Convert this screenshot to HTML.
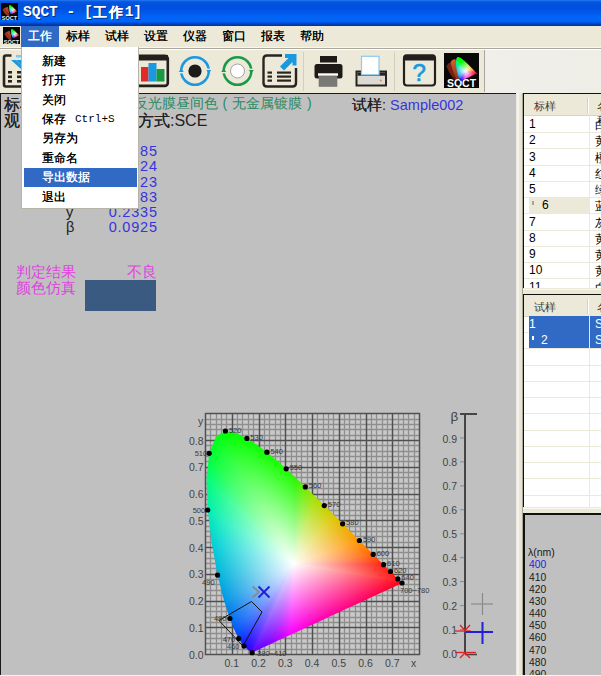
<!DOCTYPE html>
<html><head><meta charset="utf-8">
<style>
*{margin:0;padding:0;box-sizing:border-box}
html,body{width:601px;height:676px;overflow:hidden;background:#ECE9D8;font-family:"Liberation Sans",sans-serif;position:relative}
.a{position:absolute;white-space:nowrap}
#title{left:0;top:0;width:601px;height:26px;background:linear-gradient(#2a7cf4 0px,#1064e6 1px,#0456e0 2px,#0050de 5px,#0052e2 9px,#0058ea 12px,#0062f4 16px,#0066f8 21px,#005ef0 22px,#0046c6 23.5px,#0036a6 25px,#0034a0 26px)}
#ttext{left:23px;top:3px;color:#fff;font:bold 14.5px "Liberation Mono",monospace;letter-spacing:0px;text-shadow:1px 1px 0 #0a2a8a}
#ttext b{font-size:14px;letter-spacing:2px;font-family:"Liberation Sans",sans-serif;position:relative;top:1px;text-shadow:0.6px 0 0 #fff,1px 1px 0 #0a2a8a}
#menubar{left:0;top:26px;width:601px;height:21px;background:#ECE9D8}
.mi{position:absolute;top:28px;font-size:12px;color:#000;text-shadow:0.35px 0 0 currentColor;height:16px;line-height:16px}
#menusel{left:21px;top:26px;width:38px;height:21px;background:#316AC5}
#toolbar{left:0;top:47px;width:601px;height:46px;background:linear-gradient(90deg,#ECE9D8 0,#ECE9D8 485px,#f0efea 485px,#eeede6 601px);border-top:1px solid #f7f6f0}
#tbl2{left:0;top:48px;width:601px;height:2px;border-top:1px solid #aaa89e;border-bottom:1px solid #fff}
#tbline{left:0;top:92px;width:601px;height:1px;background:#9d9a8c}
#leftp{left:0;top:93px;width:516px;height:583px;background:#C0C0C0;border-top:1px solid #1a1a1a;border-left:1px solid #1a1a1a}
#split{left:516px;top:93px;width:7px;height:583px;background:linear-gradient(90deg,#dcdcd6 0,#f6f5ee 1px,#f4f3ea 3px,#ebe8d8 3.5px,#e6e3d2 5.5px,#8a887c 7px)}
.tbl{position:absolute;left:523px;width:78px;background:#fff;overflow:hidden;border-left:1px solid #111;border-top:1px solid #111}
.hdr{position:absolute;left:0;top:0;width:78px;height:22px;background:#ECE9D8;border-bottom:1px solid #d8d4c4}
.hdr span{position:absolute;left:10px;top:6px;font-size:10.5px;color:#3a3a3a}
.row{position:absolute;left:0;width:78px;height:17px;border-bottom:1px solid #ece9d8}
.row span{position:absolute;left:5px;top:1px;font-size:12px;color:#000}
.selbg{position:absolute;left:5px;top:0;width:61px;height:16px}
.c2,.c2s{position:absolute;left:71px;top:1px;font-style:normal;font-size:12px;color:#000}
.c2s{color:#fff}
.hdr em{position:absolute;left:63px;top:4px;width:2px;height:15px;background:#fff;border-left:1px solid #d6d2c2}
.hdr i{position:absolute;left:73px;top:6px;font-size:10.5px;color:#3a3a3a;font-style:normal}
.vcol{position:absolute;left:65px;top:0;width:1px;background:#ECE9D8}
#dd{left:21px;top:47px;width:118px;height:162px;background:#fff;border:1px solid #b8b5a8;border-top:none}
.dit{position:absolute;left:20px;font-size:12px;color:#000;text-shadow:0.35px 0 0 currentColor}
#ddsel{left:2px;top:121px;width:113px;height:19px;background:#316AC5}
.val{position:absolute;right:443.2px;font-size:14.5px;color:#3535dd;letter-spacing:0.8px}
</style></head><body>
<div id="title" class="a"></div>
<svg class="a" style="left:1px;top:3px" width="17" height="17" viewBox="0 0 17 17"><rect width="17" height="17" fill="#050505"/><path d="M1.5,7 Q3,4 5,5 Q6.5,9 8.5,13 L6.5,13 Q2.5,10 1.5,7Z" fill="#9a3020"/><path d="M4,5 Q5.5,3.5 7,4 L8.5,12 Q5.5,8 4,5Z" fill="#c85a30" opacity=".8"/><text x="8.5" y="16.5" text-anchor="middle" font-size="5.5" fill="#eee" font-family="Liberation Sans" font-weight="bold">SQCT</text></svg>
<div class="a" style="left:8.94px;top:4.29px;width:9.03px;height:10.08px;background:radial-gradient(circle at 3.73px 6.31px,#fff 0,rgba(255,255,255,.6) 1.2px,rgba(255,255,255,0) 4.0px),conic-gradient(from 0deg at 3.73px 6.31px, #29f700 0deg, #2df500 1.30deg, #6eec00 8.50deg, #a5e000 17.24deg, #c0d400 27.55deg, #dcc800 38.93deg, #e8b700 50.47deg, #f3a700 61.14deg, #ff9600 70.22deg, #ff7d00 77.50deg, #ff6400 82.99deg, #ff440a 87.23deg, #ff2314 90.34deg, #ff2114 92.67deg, #ff1f15 94.38deg, #ff1d15 95.66deg, #ff1b15 96.64deg, #ff1915 97.43deg, #ff1716 98.06deg, #ff1516 98.54deg, #ff1316 98.90deg, #ff1017 99.37deg, #ff0818 99.76deg, #ff0019 99.91deg, #ff002a 103.24deg, #ff0043 107.15deg, #ff0057 111.75deg, #ff0068 117.17deg, #ff0078 123.52deg, #ff0089 130.88deg, #ff0099 139.18deg, #ff00ab 148.23deg, #ff00be 157.63deg, #ff00d3 166.90deg, #ff00eb 175.58deg, #f600ff 183.39deg, #b900ff 190.20deg, #8a00ff 196.04deg, #6a00ff 201.01deg, #5a00ff 205.22deg, #5300ff 205.26deg, #4d00ff 205.32deg, #4600ff 205.42deg, #4300ff 205.49deg, #3f00ff 205.61deg, #3c00ff 205.81deg, #3900ff 206.08deg, #3500ff 206.48deg, #3200ff 206.99deg, #2a02ff 207.66deg, #2305ff 208.58deg, #1c08ff 209.74deg, #140aff 211.27deg, #0a23ff 213.30deg, #003cff 216.51deg, #0058f8 221.49deg, #0073f0 229.58deg, #0097e5 242.63deg, #00b5dd 261.80deg, #00d0d7 284.05deg, #00eeb3 302.17deg, #00fc7a 314.35deg, #00ff32 322.65deg, #00ff19 328.55deg, #00ff00 332.81deg, #04ff00 336.24deg, #08ff00 339.54deg, #0cff00 342.90deg, #11ff00 346.50deg, #15ff00 350.61deg, #19ff00 355.44deg, #29f700 360deg);clip-path:polygon(1.98px 10.02px,1.97px 10.02px,1.97px 10.03px,1.96px 10.03px,1.95px 10.03px,1.95px 10.02px,1.93px 10.01px,1.92px 10.00px,1.90px 9.98px,1.87px 9.96px,1.83px 9.92px,1.78px 9.88px,1.72px 9.82px,1.64px 9.75px,1.54px 9.63px,1.42px 9.43px,1.25px 9.10px,1.05px 8.59px,0.79px 7.83px,0.53px 6.77px,0.29px 5.44px,0.11px 4.03px,0.06px 2.72px,0.18px 1.65px,0.46px 0.96px,0.86px 0.71px,1.30px 0.80px,1.76px 1.03px,2.19px 1.30px,2.60px 1.61px,3.01px 1.94px,3.41px 2.30px,3.81px 2.68px,4.21px 3.06px,4.61px 3.46px,5.01px 3.85px,5.40px 4.24px,5.78px 4.61px,6.14px 4.97px,6.48px 5.31px,6.79px 5.63px,7.07px 5.89px,7.30px 6.13px,7.50px 6.33px,7.66px 6.49px,7.79px 6.62px,7.89px 6.72px,7.97px 6.80px,8.04px 6.87px,8.10px 6.92px,8.14px 6.97px,8.18px 7.00px,8.22px 7.05px,8.26px 7.08px,8.28px 7.10px,7.88px 7.28px,7.49px 7.46px,7.09px 7.65px,6.70px 7.83px,6.31px 8.01px,5.91px 8.20px,5.52px 8.38px,5.13px 8.56px,4.73px 8.74px,4.34px 8.93px,3.95px 9.11px,3.55px 9.29px,3.16px 9.48px,2.76px 9.66px,2.37px 9.84px)"></div>
<div id="ttext" class="a">SQCT - [<b>工作</b>1]</div>
<div id="menubar" class="a"></div>
<svg class="a" style="left:3px;top:27px" width="17" height="17" viewBox="0 0 17 17"><rect width="17" height="17" fill="#050505"/><path d="M1.5,7 Q3,4 5,5 Q6.5,9 8.5,13 L6.5,13 Q2.5,10 1.5,7Z" fill="#9a3020"/><path d="M4,5 Q5.5,3.5 7,4 L8.5,12 Q5.5,8 4,5Z" fill="#c85a30" opacity=".8"/><text x="8.5" y="16.5" text-anchor="middle" font-size="5.5" fill="#eee" font-family="Liberation Sans" font-weight="bold">SQCT</text></svg>
<div class="a" style="left:10.94px;top:28.29px;width:9.03px;height:10.08px;background:radial-gradient(circle at 3.73px 6.31px,#fff 0,rgba(255,255,255,.6) 1.2px,rgba(255,255,255,0) 4.0px),conic-gradient(from 0deg at 3.73px 6.31px, #29f700 0deg, #2df500 1.30deg, #6eec00 8.50deg, #a5e000 17.24deg, #c0d400 27.55deg, #dcc800 38.93deg, #e8b700 50.47deg, #f3a700 61.14deg, #ff9600 70.22deg, #ff7d00 77.50deg, #ff6400 82.99deg, #ff440a 87.23deg, #ff2314 90.34deg, #ff2114 92.67deg, #ff1f15 94.38deg, #ff1d15 95.66deg, #ff1b15 96.64deg, #ff1915 97.43deg, #ff1716 98.06deg, #ff1516 98.54deg, #ff1316 98.90deg, #ff1017 99.37deg, #ff0818 99.76deg, #ff0019 99.91deg, #ff002a 103.24deg, #ff0043 107.15deg, #ff0057 111.75deg, #ff0068 117.17deg, #ff0078 123.52deg, #ff0089 130.88deg, #ff0099 139.18deg, #ff00ab 148.23deg, #ff00be 157.63deg, #ff00d3 166.90deg, #ff00eb 175.58deg, #f600ff 183.39deg, #b900ff 190.20deg, #8a00ff 196.04deg, #6a00ff 201.01deg, #5a00ff 205.22deg, #5300ff 205.26deg, #4d00ff 205.32deg, #4600ff 205.42deg, #4300ff 205.49deg, #3f00ff 205.61deg, #3c00ff 205.81deg, #3900ff 206.08deg, #3500ff 206.48deg, #3200ff 206.99deg, #2a02ff 207.66deg, #2305ff 208.58deg, #1c08ff 209.74deg, #140aff 211.27deg, #0a23ff 213.30deg, #003cff 216.51deg, #0058f8 221.49deg, #0073f0 229.58deg, #0097e5 242.63deg, #00b5dd 261.80deg, #00d0d7 284.05deg, #00eeb3 302.17deg, #00fc7a 314.35deg, #00ff32 322.65deg, #00ff19 328.55deg, #00ff00 332.81deg, #04ff00 336.24deg, #08ff00 339.54deg, #0cff00 342.90deg, #11ff00 346.50deg, #15ff00 350.61deg, #19ff00 355.44deg, #29f700 360deg);clip-path:polygon(1.98px 10.02px,1.97px 10.02px,1.97px 10.03px,1.96px 10.03px,1.95px 10.03px,1.95px 10.02px,1.93px 10.01px,1.92px 10.00px,1.90px 9.98px,1.87px 9.96px,1.83px 9.92px,1.78px 9.88px,1.72px 9.82px,1.64px 9.75px,1.54px 9.63px,1.42px 9.43px,1.25px 9.10px,1.05px 8.59px,0.79px 7.83px,0.53px 6.77px,0.29px 5.44px,0.11px 4.03px,0.06px 2.72px,0.18px 1.65px,0.46px 0.96px,0.86px 0.71px,1.30px 0.80px,1.76px 1.03px,2.19px 1.30px,2.60px 1.61px,3.01px 1.94px,3.41px 2.30px,3.81px 2.68px,4.21px 3.06px,4.61px 3.46px,5.01px 3.85px,5.40px 4.24px,5.78px 4.61px,6.14px 4.97px,6.48px 5.31px,6.79px 5.63px,7.07px 5.89px,7.30px 6.13px,7.50px 6.33px,7.66px 6.49px,7.79px 6.62px,7.89px 6.72px,7.97px 6.80px,8.04px 6.87px,8.10px 6.92px,8.14px 6.97px,8.18px 7.00px,8.22px 7.05px,8.26px 7.08px,8.28px 7.10px,7.88px 7.28px,7.49px 7.46px,7.09px 7.65px,6.70px 7.83px,6.31px 8.01px,5.91px 8.20px,5.52px 8.38px,5.13px 8.56px,4.73px 8.74px,4.34px 8.93px,3.95px 9.11px,3.55px 9.29px,3.16px 9.48px,2.76px 9.66px,2.37px 9.84px)"></div>
<div id="menusel" class="a"></div>
<div class="mi" style="left:28px;color:#fff">工作</div>
<div class="mi" style="left:66px">标样</div>
<div class="mi" style="left:105px">试样</div>
<div class="mi" style="left:144px">设置</div>
<div class="mi" style="left:183px">仪器</div>
<div class="mi" style="left:222px">窗口</div>
<div class="mi" style="left:261px">报表</div>
<div class="mi" style="left:300px">帮助</div>
<div id="toolbar" class="a"></div>
<div id="tbl2" class="a"></div>
<!-- toolbar icons -->
<svg class="a" style="left:0;top:47px" width="601" height="46" viewBox="0 47 601 46">
 <path d="M11.5,55.5 H6 Q4,55.5 4,57.5 V84.5 Q4,86.5 6,86.5 H24" fill="none" stroke="#2a2420" stroke-width="2.6"/>
 <polygon points="11,60 16,60 21,65 21,69" fill="#1a98e0"/>
 <polygon points="16,60 21,60 21,65" fill="#1a98e0"/>
 <rect x="16" y="55" width="5" height="2.5" fill="#7cc8f0"/>
 <g fill="#2a2420"><rect x="8" y="71" width="4" height="2.6"/><rect x="8" y="75.5" width="4" height="2.6"/><rect x="8" y="80" width="4" height="2.6"/><rect x="17" y="71" width="5" height="2.6"/><rect x="17" y="75.5" width="5" height="2.6"/><rect x="17" y="80" width="5" height="2.6"/></g>
 <!-- bar chart -->
 <rect x="136.2" y="55.7" width="31.6" height="30.2" rx="3" fill="none" stroke="#231f1c" stroke-width="2.6"/>
 <rect x="136" y="55" width="32" height="5.5" fill="#231f1c"/>
 <rect x="141" y="67" width="7.5" height="14.5" fill="#e02a27"/>
 <rect x="148.5" y="63" width="8" height="18.5" fill="#1a98e0"/>
 <rect x="156.5" y="69" width="8" height="12.5" fill="#189a44"/>
 <!-- blue circle -->
 <circle cx="195" cy="71" r="13.8" fill="none" stroke="#1a98e0" stroke-width="2.5"/>
 <circle cx="195" cy="71" r="6.6" fill="#1e1a17"/>
 <rect x="178" y="72" width="6" height="1.4" fill="#ECE9D8"/><rect x="206" y="68.6" width="6" height="1.4" fill="#ECE9D8"/>
 <polygon points="178.7,72 183.7,72 181.2,68.5" fill="#1a98e0"/><polygon points="206.3,70 211.3,70 208.8,73.5" fill="#1a98e0"/>
 <!-- green circle -->
 <circle cx="237.5" cy="71" r="13.8" fill="none" stroke="#1a9a48" stroke-width="2.5"/>
 <circle cx="237.5" cy="71" r="7" fill="#fff" stroke="#9a9a9a" stroke-width="0.9"/>
 <rect x="220.5" y="72" width="6" height="1.4" fill="#ECE9D8"/><rect x="248.5" y="68.6" width="6" height="1.4" fill="#ECE9D8"/>
 <polygon points="221.2,72 226.2,72 223.7,68.5" fill="#1a9a48"/><polygon points="248.8,70 253.8,70 251.3,73.5" fill="#1a9a48"/>
 <!-- doc arrow -->
 <path d="M282,55.5 H267 Q263.5,55.5 263.5,59 V83 Q263.5,86.5 267,86.5 H292.5 Q296,86.5 296,83 V68" fill="none" stroke="#2a2420" stroke-width="2.4"/>
 <polygon points="280,66.5 288.5,58 285,58 285,54 296.5,54 296.5,65.5 292.5,65.5 292.5,62 284,70.5" fill="#1a98e0"/>
 <g fill="#2a2420"><rect x="267.5" y="71.5" width="4.5" height="2.2"/><rect x="267.5" y="75.5" width="4.5" height="2.2"/><rect x="267.5" y="79.5" width="4.5" height="2.2"/><rect x="277" y="71.5" width="14" height="2.2"/><rect x="277" y="75.5" width="14" height="2.2"/><rect x="277" y="79.5" width="14" height="2.2"/></g>
 <line x1="303.5" y1="52" x2="303.5" y2="91" stroke="#d3cfbf"/>
 <!-- printer -->
 <rect x="320" y="56" width="17" height="6.5" fill="#1e1a17"/>
 <rect x="314.5" y="64" width="28" height="14.5" rx="2.5" fill="#1e1a17"/>
 <rect x="318" y="73.3" width="20" height="2.5" fill="#fff"/>
 <rect x="318.7" y="75.8" width="18.6" height="11" fill="#7a7874"/>
 <!-- print preview -->
 <rect x="356.5" y="71.5" width="29.5" height="14" fill="#dcdad4" stroke="#2a2420" stroke-width="2"/>
 <rect x="357.5" y="72.5" width="27.5" height="3.2" fill="#2a2420"/>
 <rect x="361.5" y="56.3" width="17.5" height="18.5" fill="#fff" stroke="#8ccaee" stroke-width="1.2"/>
 <circle cx="380.8" cy="80.5" r="1" fill="#e88a40"/>
 <line x1="394.5" y1="52" x2="394.5" y2="91" stroke="#d3cfbf"/>
 <!-- help -->
 <rect x="404" y="55.5" width="31" height="30" rx="3" fill="none" stroke="#231f1c" stroke-width="2.2"/>
 <rect x="403.5" y="54.5" width="32" height="6" rx="2" fill="#231f1c"/>
 <text x="419.3" y="81.3" text-anchor="middle" font-size="24" fill="#1a98e0" stroke="#1a98e0" stroke-width="0.7" font-family="Liberation Sans">?</text>
 <!-- logo -->
 <defs><linearGradient id="lg1" x1="0" y1="0" x2="1" y2="1"><stop offset="0" stop-color="#22dd22"/><stop offset="0.45" stop-color="#eeeeaa"/><stop offset="1" stop-color="#ee3355"/></linearGradient></defs>
 <rect x="444" y="53" width="35" height="35" fill="#080808"/>
 <defs><linearGradient id="pt1" x1="0" y1="0" x2="0" y2="1"><stop offset="0" stop-color="#a03020" stop-opacity=".7"/><stop offset="1" stop-color="#6a1a10"/></linearGradient><linearGradient id="pt2" x1="0" y1="0" x2="0" y2="1"><stop offset="0" stop-color="#d86030"/><stop offset="1" stop-color="#8a3018"/></linearGradient></defs>
 <path d="M446.5,66 Q449,61 452,63 Q455,72 458,80 L455,80 Q449,74 446.5,66Z" fill="url(#pt1)"/>
 <path d="M450.5,62 Q453,58 456,60 Q457,70 459.5,80 L457,80 Q452,70 450.5,62Z" fill="url(#pt2)"/>
 <path d="M455,59 Q457,57 459,58 L459,70 Q456,64 455,59Z" fill="#5a2a80" opacity=".6"/>
 <text x="461.5" y="86.5" text-anchor="middle" font-size="10.5" font-weight="bold" fill="#fff" font-family="Liberation Sans">SQCT</text>
 <line x1="484.5" y1="50" x2="484.5" y2="92" stroke="#aaa89e"/>
</svg>
<div id="leftp" class="a"></div>
<div id="split" class="a"></div>

<!-- left panel texts -->
<div class="a" style="left:4px;top:95px;font-size:16px;color:#222;text-shadow:0.4px 0 0 #222">标样：</div>
<div class="a" style="left:4px;top:111px;font-size:16px;color:#222;text-shadow:0.4px 0 0 #222">观</div>
<div class="a" style="left:122px;top:111px;font-size:16px;color:#222"><span style="text-shadow:0.4px 0 0 #222">量方式</span>:SCE</div>
<div class="a" style="left:134px;top:95px;font-size:14px;color:#2a8a62">反光膜昼间色</div>
<div class="a" style="left:222.5px;top:95px;font-size:14px;color:#2a8a62">(</div>
<div class="a" style="left:232px;top:95px;font-size:14px;color:#2a8a62">无金属镀膜</div>
<div class="a" style="left:307px;top:95px;font-size:14px;color:#2a8a62">)</div>
<div class="a" style="left:352px;top:96px;font-size:14.5px;color:#222"><span style="text-shadow:0.4px 0 0 #222">试样</span>: <span style="color:#3535dd">Sample002</span></div>

<div class="val" style="top:143px">85</div>
<div class="val" style="top:158px">24</div>
<div class="val" style="top:174px">23</div>
<div class="val" style="top:189px">83</div>
<div class="a" style="left:66px;top:204px;font-size:14.5px;color:#222">y</div>
<div class="val" style="top:204px">0.2335</div>
<div class="a" style="left:66px;top:219px;font-size:14.5px;color:#222">β</div>
<div class="val" style="top:219px">0.0925</div>

<div class="a" style="left:16px;top:263px;font-size:14.5px;color:#e040e0">判定结果</div>
<div class="a" style="left:127px;top:263px;font-size:14.5px;color:#e040e0">不良</div>
<div class="a" style="left:16px;top:279px;font-size:14.5px;color:#e040e0">颜色仿真</div>
<div class="a" style="left:85px;top:280px;width:71px;height:31px;background:#3b5a82"></div>

<!-- chart -->
<svg class="a" style="left:0;top:0" width="601" height="676" viewBox="0 0 601 676" font-family="Liberation Sans">
<rect x="205" y="413" width="215" height="242" fill="#c9c9c9"/><g stroke="#8e8e8e" stroke-width="1.3"><line x1="210.5" y1="413" x2="210.5" y2="655" /><line x1="216.5" y1="413" x2="216.5" y2="655" /><line x1="221.5" y1="413" x2="221.5" y2="655" /><line x1="226.5" y1="413" x2="226.5" y2="655" /><line x1="237.5" y1="413" x2="237.5" y2="655" /><line x1="242.5" y1="413" x2="242.5" y2="655" /><line x1="248.5" y1="413" x2="248.5" y2="655" /><line x1="253.5" y1="413" x2="253.5" y2="655" /><line x1="264.5" y1="413" x2="264.5" y2="655" /><line x1="269.5" y1="413" x2="269.5" y2="655" /><line x1="275.5" y1="413" x2="275.5" y2="655" /><line x1="280.5" y1="413" x2="280.5" y2="655" /><line x1="291.5" y1="413" x2="291.5" y2="655" /><line x1="296.5" y1="413" x2="296.5" y2="655" /><line x1="301.5" y1="413" x2="301.5" y2="655" /><line x1="307.5" y1="413" x2="307.5" y2="655" /><line x1="317.5" y1="413" x2="317.5" y2="655" /><line x1="323.5" y1="413" x2="323.5" y2="655" /><line x1="328.5" y1="413" x2="328.5" y2="655" /><line x1="333.5" y1="413" x2="333.5" y2="655" /><line x1="344.5" y1="413" x2="344.5" y2="655" /><line x1="349.5" y1="413" x2="349.5" y2="655" /><line x1="355.5" y1="413" x2="355.5" y2="655" /><line x1="360.5" y1="413" x2="360.5" y2="655" /><line x1="371.5" y1="413" x2="371.5" y2="655" /><line x1="376.5" y1="413" x2="376.5" y2="655" /><line x1="382.5" y1="413" x2="382.5" y2="655" /><line x1="387.5" y1="413" x2="387.5" y2="655" /><line x1="398.5" y1="413" x2="398.5" y2="655" /><line x1="403.5" y1="413" x2="403.5" y2="655" /><line x1="408.5" y1="413" x2="408.5" y2="655" /><line x1="414.5" y1="413" x2="414.5" y2="655" /><line x1="205" y1="649.5" x2="420" y2="649.5" /><line x1="205" y1="643.5" x2="420" y2="643.5" /><line x1="205" y1="638.5" x2="420" y2="638.5" /><line x1="205" y1="633.5" x2="420" y2="633.5" /><line x1="205" y1="622.5" x2="420" y2="622.5" /><line x1="205" y1="617.5" x2="420" y2="617.5" /><line x1="205" y1="611.5" x2="420" y2="611.5" /><line x1="205" y1="606.5" x2="420" y2="606.5" /><line x1="205" y1="595.5" x2="420" y2="595.5" /><line x1="205" y1="590.5" x2="420" y2="590.5" /><line x1="205" y1="584.5" x2="420" y2="584.5" /><line x1="205" y1="579.5" x2="420" y2="579.5" /><line x1="205" y1="568.5" x2="420" y2="568.5" /><line x1="205" y1="563.5" x2="420" y2="563.5" /><line x1="205" y1="558.5" x2="420" y2="558.5" /><line x1="205" y1="552.5" x2="420" y2="552.5" /><line x1="205" y1="542.5" x2="420" y2="542.5" /><line x1="205" y1="536.5" x2="420" y2="536.5" /><line x1="205" y1="531.5" x2="420" y2="531.5" /><line x1="205" y1="526.5" x2="420" y2="526.5" /><line x1="205" y1="515.5" x2="420" y2="515.5" /><line x1="205" y1="510.5" x2="420" y2="510.5" /><line x1="205" y1="504.5" x2="420" y2="504.5" /><line x1="205" y1="499.5" x2="420" y2="499.5" /><line x1="205" y1="488.5" x2="420" y2="488.5" /><line x1="205" y1="483.5" x2="420" y2="483.5" /><line x1="205" y1="477.5" x2="420" y2="477.5" /><line x1="205" y1="472.5" x2="420" y2="472.5" /><line x1="205" y1="461.5" x2="420" y2="461.5" /><line x1="205" y1="456.5" x2="420" y2="456.5" /><line x1="205" y1="451.5" x2="420" y2="451.5" /><line x1="205" y1="445.5" x2="420" y2="445.5" /><line x1="205" y1="435.5" x2="420" y2="435.5" /><line x1="205" y1="429.5" x2="420" y2="429.5" /><line x1="205" y1="424.5" x2="420" y2="424.5" /><line x1="205" y1="419.5" x2="420" y2="419.5" /></g><g stroke="#505050" stroke-width="1.5"><line x1="205.5" y1="413" x2="205.5" y2="655" /><line x1="232.5" y1="413" x2="232.5" y2="655" /><line x1="259.5" y1="413" x2="259.5" y2="655" /><line x1="285.5" y1="413" x2="285.5" y2="655" /><line x1="312.5" y1="413" x2="312.5" y2="655" /><line x1="339.5" y1="413" x2="339.5" y2="655" /><line x1="366.5" y1="413" x2="366.5" y2="655" /><line x1="392.5" y1="413" x2="392.5" y2="655" /><line x1="419.5" y1="413" x2="419.5" y2="655" /><line x1="205" y1="654.5" x2="420" y2="654.5" /><line x1="205" y1="627.5" x2="420" y2="627.5" /><line x1="205" y1="601.5" x2="420" y2="601.5" /><line x1="205" y1="574.5" x2="420" y2="574.5" /><line x1="205" y1="547.5" x2="420" y2="547.5" /><line x1="205" y1="520.5" x2="420" y2="520.5" /><line x1="205" y1="494.5" x2="420" y2="494.5" /><line x1="205" y1="467.5" x2="420" y2="467.5" /><line x1="205" y1="440.5" x2="420" y2="440.5" /><line x1="205" y1="413.5" x2="420" y2="413.5" /></g>
</svg>
<div class="a" style="left:205px;top:414px;width:215px;height:240px;background:conic-gradient(from 0deg at 88.8px 150.1px, #29f700 0deg, #2df500 1.30deg, #6eec00 8.50deg, #a5e000 17.24deg, #c0d400 27.55deg, #dcc800 38.93deg, #e8b700 50.47deg, #f3a700 61.14deg, #ff9600 70.22deg, #ff7d00 77.50deg, #ff6400 82.99deg, #ff440a 87.23deg, #ff2314 90.34deg, #ff2114 92.67deg, #ff1f15 94.38deg, #ff1d15 95.66deg, #ff1b15 96.64deg, #ff1915 97.43deg, #ff1716 98.06deg, #ff1516 98.54deg, #ff1316 98.90deg, #ff1017 99.37deg, #ff0818 99.76deg, #ff0019 99.91deg, #ff002a 103.24deg, #ff0043 107.15deg, #ff0057 111.75deg, #ff0068 117.17deg, #ff0078 123.52deg, #ff0089 130.88deg, #ff0099 139.18deg, #ff00ab 148.23deg, #ff00be 157.63deg, #ff00d3 166.90deg, #ff00eb 175.58deg, #f600ff 183.39deg, #b900ff 190.20deg, #8a00ff 196.04deg, #6a00ff 201.01deg, #5a00ff 205.22deg, #5300ff 205.26deg, #4d00ff 205.32deg, #4600ff 205.42deg, #4300ff 205.49deg, #3f00ff 205.61deg, #3c00ff 205.81deg, #3900ff 206.08deg, #3500ff 206.48deg, #3200ff 206.99deg, #2a02ff 207.66deg, #2305ff 208.58deg, #1c08ff 209.74deg, #140aff 211.27deg, #0a23ff 213.30deg, #003cff 216.51deg, #0058f8 221.49deg, #0073f0 229.58deg, #0097e5 242.63deg, #00b5dd 261.80deg, #00d0d7 284.05deg, #00eeb3 302.17deg, #00fc7a 314.35deg, #00ff32 322.65deg, #00ff19 328.55deg, #00ff00 332.81deg, #04ff00 336.24deg, #08ff00 339.54deg, #0cff00 342.90deg, #11ff00 346.50deg, #15ff00 350.61deg, #19ff00 355.44deg, #29f700 360deg);clip-path:polygon(47.1px 238.7px,47.0px 238.7px,46.9px 238.7px,46.7px 238.7px,46.5px 238.7px,46.3px 238.6px,46.1px 238.4px,45.7px 238.2px,45.1px 237.7px,44.5px 237.1px,43.6px 236.3px,42.4px 235.3px,40.9px 233.9px,39.0px 232.1px,36.7px 229.3px,33.7px 224.5px,29.8px 216.8px,24.9px 204.5px,18.9px 186.3px,12.6px 161.1px,6.8px 129.6px,2.7px 96.0px,1.5px 64.8px,4.2px 39.3px,10.9px 22.8px,20.4px 17.0px,31.0px 19.0px,41.9px 24.4px,52.1px 30.9px,61.9px 38.2px,71.6px 46.2px,81.2px 54.8px,90.7px 63.7px,100.3px 72.9px,109.8px 82.3px,119.3px 91.6px,128.6px 100.8px,137.6px 109.8px,146.2px 118.4px,154.4px 126.5px,161.8px 133.9px,168.2px 140.4px,173.9px 146.0px,178.6px 150.7px,182.4px 154.5px,185.5px 157.5px,187.9px 159.9px,189.9px 161.9px,191.5px 163.5px,192.8px 164.9px,193.9px 165.9px,194.7px 166.7px,195.8px 167.8px,196.7px 168.7px,197.0px 169.0px,187.7px 173.4px,178.3px 177.7px,168.9px 182.1px,159.5px 186.4px,150.2px 190.8px,140.8px 195.1px,131.4px 199.5px,122.1px 203.8px,112.7px 208.2px,103.3px 212.6px,93.9px 216.9px,84.6px 221.3px,75.2px 225.6px,65.8px 230.0px,56.4px 234.3px)"></div>
<svg class="a" style="left:0;top:0" width="601" height="676" viewBox="0 0 601 676" font-family="Liberation Sans">
<defs><linearGradient id="w0" gradientUnits="userSpaceOnUse" x1="293.8" y1="564.1" x2="316.2" y2="631.3"><stop offset="0" stop-color="#fff"/><stop offset="1" stop-color="#fff" stop-opacity="0"/></linearGradient><linearGradient id="w1" gradientUnits="userSpaceOnUse" x1="293.8" y1="564.1" x2="309.2" y2="641.2"><stop offset="0" stop-color="#fff"/><stop offset="1" stop-color="#fff" stop-opacity="0"/></linearGradient><linearGradient id="w2" gradientUnits="userSpaceOnUse" x1="293.8" y1="564.1" x2="293.8" y2="652.7"><stop offset="0" stop-color="#fff"/><stop offset="1" stop-color="#fff" stop-opacity="0"/></linearGradient><linearGradient id="w3" gradientUnits="userSpaceOnUse" x1="293.8" y1="564.1" x2="293.8" y2="652.7"><stop offset="0" stop-color="#fff"/><stop offset="1" stop-color="#fff" stop-opacity="0"/></linearGradient><linearGradient id="w4" gradientUnits="userSpaceOnUse" x1="293.8" y1="564.1" x2="255.1" y2="654.3"><stop offset="0" stop-color="#fff"/><stop offset="1" stop-color="#fff" stop-opacity="0"/></linearGradient><linearGradient id="w5" gradientUnits="userSpaceOnUse" x1="293.8" y1="564.1" x2="241.5" y2="646.3"><stop offset="0" stop-color="#fff"/><stop offset="1" stop-color="#fff" stop-opacity="0"/></linearGradient><linearGradient id="w6" gradientUnits="userSpaceOnUse" x1="293.8" y1="564.1" x2="234.6" y2="639.5"><stop offset="0" stop-color="#fff"/><stop offset="1" stop-color="#fff" stop-opacity="0"/></linearGradient><linearGradient id="w7" gradientUnits="userSpaceOnUse" x1="293.8" y1="564.1" x2="232.3" y2="636.5"><stop offset="0" stop-color="#fff"/><stop offset="1" stop-color="#fff" stop-opacity="0"/></linearGradient><linearGradient id="w8" gradientUnits="userSpaceOnUse" x1="293.8" y1="564.1" x2="230.1" y2="633.3"><stop offset="0" stop-color="#fff"/><stop offset="1" stop-color="#fff" stop-opacity="0"/></linearGradient><linearGradient id="w9" gradientUnits="userSpaceOnUse" x1="293.8" y1="564.1" x2="231.4" y2="635.2"><stop offset="0" stop-color="#fff"/><stop offset="1" stop-color="#fff" stop-opacity="0"/></linearGradient><linearGradient id="w10" gradientUnits="userSpaceOnUse" x1="293.8" y1="564.1" x2="231.7" y2="635.7"><stop offset="0" stop-color="#fff"/><stop offset="1" stop-color="#fff" stop-opacity="0"/></linearGradient><linearGradient id="w11" gradientUnits="userSpaceOnUse" x1="293.8" y1="564.1" x2="230.9" y2="634.5"><stop offset="0" stop-color="#fff"/><stop offset="1" stop-color="#fff" stop-opacity="0"/></linearGradient><linearGradient id="w12" gradientUnits="userSpaceOnUse" x1="293.8" y1="564.1" x2="227.9" y2="630.0"><stop offset="0" stop-color="#fff"/><stop offset="1" stop-color="#fff" stop-opacity="0"/></linearGradient><linearGradient id="w13" gradientUnits="userSpaceOnUse" x1="293.8" y1="564.1" x2="224.1" y2="622.2"><stop offset="0" stop-color="#fff"/><stop offset="1" stop-color="#fff" stop-opacity="0"/></linearGradient><linearGradient id="w14" gradientUnits="userSpaceOnUse" x1="293.8" y1="564.1" x2="220.9" y2="610.6"><stop offset="0" stop-color="#fff"/><stop offset="1" stop-color="#fff" stop-opacity="0"/></linearGradient><linearGradient id="w15" gradientUnits="userSpaceOnUse" x1="293.8" y1="564.1" x2="219.9" y2="601.0"><stop offset="0" stop-color="#fff"/><stop offset="1" stop-color="#fff" stop-opacity="0"/></linearGradient><linearGradient id="w16" gradientUnits="userSpaceOnUse" x1="293.8" y1="564.1" x2="220.0" y2="593.5"><stop offset="0" stop-color="#fff"/><stop offset="1" stop-color="#fff" stop-opacity="0"/></linearGradient><linearGradient id="w17" gradientUnits="userSpaceOnUse" x1="293.8" y1="564.1" x2="220.0" y2="588.6"><stop offset="0" stop-color="#fff"/><stop offset="1" stop-color="#fff" stop-opacity="0"/></linearGradient><linearGradient id="w18" gradientUnits="userSpaceOnUse" x1="293.8" y1="564.1" x2="219.5" y2="582.5"><stop offset="0" stop-color="#fff"/><stop offset="1" stop-color="#fff" stop-opacity="0"/></linearGradient><linearGradient id="w19" gradientUnits="userSpaceOnUse" x1="293.8" y1="564.1" x2="218.2" y2="578.2"><stop offset="0" stop-color="#fff"/><stop offset="1" stop-color="#fff" stop-opacity="0"/></linearGradient><linearGradient id="w20" gradientUnits="userSpaceOnUse" x1="293.8" y1="564.1" x2="215.4" y2="573.7"><stop offset="0" stop-color="#fff"/><stop offset="1" stop-color="#fff" stop-opacity="0"/></linearGradient><linearGradient id="w21" gradientUnits="userSpaceOnUse" x1="293.8" y1="564.1" x2="209.8" y2="567.2"><stop offset="0" stop-color="#fff"/><stop offset="1" stop-color="#fff" stop-opacity="0"/></linearGradient><linearGradient id="w22" gradientUnits="userSpaceOnUse" x1="293.8" y1="564.1" x2="198.6" y2="554.1"><stop offset="0" stop-color="#fff"/><stop offset="1" stop-color="#fff" stop-opacity="0"/></linearGradient><linearGradient id="w23" gradientUnits="userSpaceOnUse" x1="293.8" y1="564.1" x2="182.6" y2="519.1"><stop offset="0" stop-color="#fff"/><stop offset="1" stop-color="#fff" stop-opacity="0"/></linearGradient><linearGradient id="w24" gradientUnits="userSpaceOnUse" x1="293.8" y1="564.1" x2="215.5" y2="437.0"><stop offset="0" stop-color="#fff"/><stop offset="1" stop-color="#fff" stop-opacity="0"/></linearGradient><linearGradient id="w25" gradientUnits="userSpaceOnUse" x1="293.8" y1="564.1" x2="315.9" y2="448.2"><stop offset="0" stop-color="#fff"/><stop offset="1" stop-color="#fff" stop-opacity="0"/></linearGradient><linearGradient id="w26" gradientUnits="userSpaceOnUse" x1="293.8" y1="564.1" x2="334.7" y2="482.4"><stop offset="0" stop-color="#fff"/><stop offset="1" stop-color="#fff" stop-opacity="0"/></linearGradient><linearGradient id="w27" gradientUnits="userSpaceOnUse" x1="293.8" y1="564.1" x2="337.2" y2="495.9"><stop offset="0" stop-color="#fff"/><stop offset="1" stop-color="#fff" stop-opacity="0"/></linearGradient><linearGradient id="w28" gradientUnits="userSpaceOnUse" x1="293.8" y1="564.1" x2="337.8" y2="504.9"><stop offset="0" stop-color="#fff"/><stop offset="1" stop-color="#fff" stop-opacity="0"/></linearGradient><linearGradient id="w29" gradientUnits="userSpaceOnUse" x1="293.8" y1="564.1" x2="337.8" y2="511.0"><stop offset="0" stop-color="#fff"/><stop offset="1" stop-color="#fff" stop-opacity="0"/></linearGradient><linearGradient id="w30" gradientUnits="userSpaceOnUse" x1="293.8" y1="564.1" x2="337.8" y2="514.9"><stop offset="0" stop-color="#fff"/><stop offset="1" stop-color="#fff" stop-opacity="0"/></linearGradient><linearGradient id="w31" gradientUnits="userSpaceOnUse" x1="293.8" y1="564.1" x2="337.8" y2="517.1"><stop offset="0" stop-color="#fff"/><stop offset="1" stop-color="#fff" stop-opacity="0"/></linearGradient><linearGradient id="w32" gradientUnits="userSpaceOnUse" x1="293.8" y1="564.1" x2="337.9" y2="518.2"><stop offset="0" stop-color="#fff"/><stop offset="1" stop-color="#fff" stop-opacity="0"/></linearGradient><linearGradient id="w33" gradientUnits="userSpaceOnUse" x1="293.8" y1="564.1" x2="338.0" y2="519.0"><stop offset="0" stop-color="#fff"/><stop offset="1" stop-color="#fff" stop-opacity="0"/></linearGradient><linearGradient id="w34" gradientUnits="userSpaceOnUse" x1="293.8" y1="564.1" x2="338.1" y2="519.2"><stop offset="0" stop-color="#fff"/><stop offset="1" stop-color="#fff" stop-opacity="0"/></linearGradient><linearGradient id="w35" gradientUnits="userSpaceOnUse" x1="293.8" y1="564.1" x2="338.2" y2="519.4"><stop offset="0" stop-color="#fff"/><stop offset="1" stop-color="#fff" stop-opacity="0"/></linearGradient><linearGradient id="w36" gradientUnits="userSpaceOnUse" x1="293.8" y1="564.1" x2="338.3" y2="519.5"><stop offset="0" stop-color="#fff"/><stop offset="1" stop-color="#fff" stop-opacity="0"/></linearGradient><linearGradient id="w37" gradientUnits="userSpaceOnUse" x1="293.8" y1="564.1" x2="338.3" y2="519.5"><stop offset="0" stop-color="#fff"/><stop offset="1" stop-color="#fff" stop-opacity="0"/></linearGradient><linearGradient id="w38" gradientUnits="userSpaceOnUse" x1="293.8" y1="564.1" x2="338.2" y2="519.5"><stop offset="0" stop-color="#fff"/><stop offset="1" stop-color="#fff" stop-opacity="0"/></linearGradient><linearGradient id="w39" gradientUnits="userSpaceOnUse" x1="293.8" y1="564.1" x2="338.4" y2="519.5"><stop offset="0" stop-color="#fff"/><stop offset="1" stop-color="#fff" stop-opacity="0"/></linearGradient><linearGradient id="w40" gradientUnits="userSpaceOnUse" x1="293.8" y1="564.1" x2="338.2" y2="519.5"><stop offset="0" stop-color="#fff"/><stop offset="1" stop-color="#fff" stop-opacity="0"/></linearGradient><linearGradient id="w41" gradientUnits="userSpaceOnUse" x1="293.8" y1="564.1" x2="338.2" y2="519.5"><stop offset="0" stop-color="#fff"/><stop offset="1" stop-color="#fff" stop-opacity="0"/></linearGradient><linearGradient id="w42" gradientUnits="userSpaceOnUse" x1="293.8" y1="564.1" x2="337.9" y2="519.5"><stop offset="0" stop-color="#fff"/><stop offset="1" stop-color="#fff" stop-opacity="0"/></linearGradient><linearGradient id="w43" gradientUnits="userSpaceOnUse" x1="293.8" y1="564.1" x2="338.4" y2="519.5"><stop offset="0" stop-color="#fff"/><stop offset="1" stop-color="#fff" stop-opacity="0"/></linearGradient><linearGradient id="w44" gradientUnits="userSpaceOnUse" x1="293.8" y1="564.1" x2="338.4" y2="519.5"><stop offset="0" stop-color="#fff"/><stop offset="1" stop-color="#fff" stop-opacity="0"/></linearGradient><linearGradient id="w45" gradientUnits="userSpaceOnUse" x1="293.8" y1="564.1" x2="337.9" y2="519.5"><stop offset="0" stop-color="#fff"/><stop offset="1" stop-color="#fff" stop-opacity="0"/></linearGradient><linearGradient id="w46" gradientUnits="userSpaceOnUse" x1="293.8" y1="564.1" x2="338.4" y2="519.5"><stop offset="0" stop-color="#fff"/><stop offset="1" stop-color="#fff" stop-opacity="0"/></linearGradient><linearGradient id="w47" gradientUnits="userSpaceOnUse" x1="293.8" y1="564.1" x2="338.4" y2="519.5"><stop offset="0" stop-color="#fff"/><stop offset="1" stop-color="#fff" stop-opacity="0"/></linearGradient><linearGradient id="w48" gradientUnits="userSpaceOnUse" x1="293.8" y1="564.1" x2="338.4" y2="519.5"><stop offset="0" stop-color="#fff"/><stop offset="1" stop-color="#fff" stop-opacity="0"/></linearGradient><linearGradient id="w49" gradientUnits="userSpaceOnUse" x1="293.8" y1="564.1" x2="337.1" y2="519.7"><stop offset="0" stop-color="#fff"/><stop offset="1" stop-color="#fff" stop-opacity="0"/></linearGradient><linearGradient id="w50" gradientUnits="userSpaceOnUse" x1="293.8" y1="564.1" x2="338.4" y2="519.4"><stop offset="0" stop-color="#fff"/><stop offset="1" stop-color="#fff" stop-opacity="0"/></linearGradient><linearGradient id="w51" gradientUnits="userSpaceOnUse" x1="293.8" y1="564.1" x2="338.4" y2="519.4"><stop offset="0" stop-color="#fff"/><stop offset="1" stop-color="#fff" stop-opacity="0"/></linearGradient><linearGradient id="w52" gradientUnits="userSpaceOnUse" x1="293.8" y1="564.1" x2="338.4" y2="519.4"><stop offset="0" stop-color="#fff"/><stop offset="1" stop-color="#fff" stop-opacity="0"/></linearGradient><linearGradient id="w53" gradientUnits="userSpaceOnUse" x1="293.8" y1="564.1" x2="338.4" y2="519.4"><stop offset="0" stop-color="#fff"/><stop offset="1" stop-color="#fff" stop-opacity="0"/></linearGradient><linearGradient id="w54" gradientUnits="userSpaceOnUse" x1="293.8" y1="564.1" x2="320.2" y2="621.0"><stop offset="0" stop-color="#fff"/><stop offset="1" stop-color="#fff" stop-opacity="0"/></linearGradient><linearGradient id="w55" gradientUnits="userSpaceOnUse" x1="293.8" y1="564.1" x2="320.2" y2="621.0"><stop offset="0" stop-color="#fff"/><stop offset="1" stop-color="#fff" stop-opacity="0"/></linearGradient><linearGradient id="w56" gradientUnits="userSpaceOnUse" x1="293.8" y1="564.1" x2="320.2" y2="621.0"><stop offset="0" stop-color="#fff"/><stop offset="1" stop-color="#fff" stop-opacity="0"/></linearGradient><linearGradient id="w57" gradientUnits="userSpaceOnUse" x1="293.8" y1="564.1" x2="320.2" y2="621.0"><stop offset="0" stop-color="#fff"/><stop offset="1" stop-color="#fff" stop-opacity="0"/></linearGradient><linearGradient id="w58" gradientUnits="userSpaceOnUse" x1="293.8" y1="564.1" x2="320.2" y2="621.0"><stop offset="0" stop-color="#fff"/><stop offset="1" stop-color="#fff" stop-opacity="0"/></linearGradient><linearGradient id="w59" gradientUnits="userSpaceOnUse" x1="293.8" y1="564.1" x2="320.2" y2="621.0"><stop offset="0" stop-color="#fff"/><stop offset="1" stop-color="#fff" stop-opacity="0"/></linearGradient><linearGradient id="w60" gradientUnits="userSpaceOnUse" x1="293.8" y1="564.1" x2="320.2" y2="621.0"><stop offset="0" stop-color="#fff"/><stop offset="1" stop-color="#fff" stop-opacity="0"/></linearGradient><linearGradient id="w61" gradientUnits="userSpaceOnUse" x1="293.8" y1="564.1" x2="320.2" y2="621.0"><stop offset="0" stop-color="#fff"/><stop offset="1" stop-color="#fff" stop-opacity="0"/></linearGradient><linearGradient id="w62" gradientUnits="userSpaceOnUse" x1="293.8" y1="564.1" x2="320.2" y2="621.0"><stop offset="0" stop-color="#fff"/><stop offset="1" stop-color="#fff" stop-opacity="0"/></linearGradient><linearGradient id="w63" gradientUnits="userSpaceOnUse" x1="293.8" y1="564.1" x2="320.2" y2="621.0"><stop offset="0" stop-color="#fff"/><stop offset="1" stop-color="#fff" stop-opacity="0"/></linearGradient><linearGradient id="w64" gradientUnits="userSpaceOnUse" x1="293.8" y1="564.1" x2="320.2" y2="621.0"><stop offset="0" stop-color="#fff"/><stop offset="1" stop-color="#fff" stop-opacity="0"/></linearGradient><linearGradient id="w65" gradientUnits="userSpaceOnUse" x1="293.8" y1="564.1" x2="320.2" y2="621.0"><stop offset="0" stop-color="#fff"/><stop offset="1" stop-color="#fff" stop-opacity="0"/></linearGradient><linearGradient id="w66" gradientUnits="userSpaceOnUse" x1="293.8" y1="564.1" x2="320.2" y2="621.0"><stop offset="0" stop-color="#fff"/><stop offset="1" stop-color="#fff" stop-opacity="0"/></linearGradient><linearGradient id="w67" gradientUnits="userSpaceOnUse" x1="293.8" y1="564.1" x2="320.2" y2="621.0"><stop offset="0" stop-color="#fff"/><stop offset="1" stop-color="#fff" stop-opacity="0"/></linearGradient><linearGradient id="w68" gradientUnits="userSpaceOnUse" x1="293.8" y1="564.1" x2="320.2" y2="621.0"><stop offset="0" stop-color="#fff"/><stop offset="1" stop-color="#fff" stop-opacity="0"/></linearGradient><linearGradient id="w69" gradientUnits="userSpaceOnUse" x1="293.8" y1="564.1" x2="320.2" y2="621.0"><stop offset="0" stop-color="#fff"/><stop offset="1" stop-color="#fff" stop-opacity="0"/></linearGradient></defs><g shape-rendering="crispEdges"><polygon points="293.77,564.12 252.07,652.66 251.99,652.69" fill="url(#w0)"/><polygon points="293.77,564.12 251.99,652.69 251.86,652.72" fill="url(#w1)"/><polygon points="293.77,564.12 251.86,652.72 251.67,652.72" fill="url(#w2)"/><polygon points="293.77,564.12 251.67,652.72 251.54,652.72" fill="url(#w3)"/><polygon points="293.77,564.12 251.54,652.72 251.35,652.64" fill="url(#w4)"/><polygon points="293.77,564.12 251.35,652.64 251.06,652.45" fill="url(#w5)"/><polygon points="293.77,564.12 251.06,652.45 250.68,652.15" fill="url(#w6)"/><polygon points="293.77,564.12 250.68,652.15 250.15,651.70" fill="url(#w7)"/><polygon points="293.77,564.12 250.15,651.70 249.48,651.08" fill="url(#w8)"/><polygon points="293.77,564.12 249.48,651.08 248.59,650.31" fill="url(#w9)"/><polygon points="293.77,564.12 248.59,650.31 247.39,649.27" fill="url(#w10)"/><polygon points="293.77,564.12 247.39,649.27 245.89,647.93" fill="url(#w11)"/><polygon points="293.77,564.12 245.89,647.93 244.02,646.06" fill="url(#w12)"/><polygon points="293.77,564.12 244.02,646.06 241.75,643.33" fill="url(#w13)"/><polygon points="293.77,564.12 241.75,643.33 238.70,638.54" fill="url(#w14)"/><polygon points="293.77,564.12 238.70,638.54 234.82,630.78" fill="url(#w15)"/><polygon points="293.77,564.12 234.82,630.78 229.92,618.50" fill="url(#w16)"/><polygon points="293.77,564.12 229.92,618.50 223.88,600.31" fill="url(#w17)"/><polygon points="293.77,564.12 223.88,600.31 217.64,575.09" fill="url(#w18)"/><polygon points="293.77,564.12 217.64,575.09 211.79,543.60" fill="url(#w19)"/><polygon points="293.77,564.12 211.79,543.60 207.69,509.98" fill="url(#w20)"/><polygon points="293.77,564.12 207.69,509.98 206.54,478.84" fill="url(#w21)"/><polygon points="293.77,564.12 206.54,478.84 209.22,453.32" fill="url(#w22)"/><polygon points="293.77,564.12 209.22,453.32 215.91,436.79" fill="url(#w23)"/><polygon points="293.77,564.12 215.91,436.79 225.38,430.96" fill="url(#w24)"/><polygon points="293.77,564.12 225.38,430.96 236.05,432.99" fill="url(#w25)"/><polygon points="293.77,564.12 236.05,432.99 246.88,438.42" fill="url(#w26)"/><polygon points="293.77,564.12 246.88,438.42 257.10,444.92" fill="url(#w27)"/><polygon points="293.77,564.12 257.10,444.92 266.92,452.22" fill="url(#w28)"/><polygon points="293.77,564.12 266.92,452.22 276.60,460.25" fill="url(#w29)"/><polygon points="293.77,564.12 276.60,460.25 286.18,468.81" fill="url(#w30)"/><polygon points="293.77,564.12 286.18,468.81 295.73,477.74" fill="url(#w31)"/><polygon points="293.77,564.12 295.73,477.74 305.30,486.95" fill="url(#w32)"/><polygon points="293.77,564.12 305.30,486.95 314.83,496.28" fill="url(#w33)"/><polygon points="293.77,564.12 314.83,496.28 324.30,505.62" fill="url(#w34)"/><polygon points="293.77,564.12 324.30,505.62 333.58,514.85" fill="url(#w35)"/><polygon points="293.77,564.12 333.58,514.85 342.59,523.83" fill="url(#w36)"/><polygon points="293.77,564.12 342.59,523.83 351.23,532.45" fill="url(#w37)"/><polygon points="293.77,564.12 351.23,532.45 359.37,540.53" fill="url(#w38)"/><polygon points="293.77,564.12 359.37,540.53 366.78,547.94" fill="url(#w39)"/><polygon points="293.77,564.12 366.78,547.94 373.22,554.36" fill="url(#w40)"/><polygon points="293.77,564.12 373.22,554.36 378.89,560.00" fill="url(#w41)"/><polygon points="293.77,564.12 378.89,560.00 383.60,564.65" fill="url(#w42)"/><polygon points="293.77,564.12 383.60,564.65 387.43,568.48" fill="url(#w43)"/><polygon points="293.77,564.12 387.43,568.48 390.48,571.53" fill="url(#w44)"/><polygon points="293.77,564.12 390.48,571.53 392.91,573.94" fill="url(#w45)"/><polygon points="293.77,564.12 392.91,573.94 394.86,575.89" fill="url(#w46)"/><polygon points="293.77,564.12 394.86,575.89 396.50,577.52" fill="url(#w47)"/><polygon points="293.77,564.12 396.50,577.52 397.83,578.86" fill="url(#w48)"/><polygon points="293.77,564.12 397.83,578.86 398.90,579.90" fill="url(#w49)"/><polygon points="293.77,564.12 398.90,579.90 399.70,580.71" fill="url(#w50)"/><polygon points="293.77,564.12 399.70,580.71 400.77,581.77" fill="url(#w51)"/><polygon points="293.77,564.12 400.77,581.77 401.68,582.68" fill="url(#w52)"/><polygon points="293.77,564.12 401.68,582.68 402.03,583.03" fill="url(#w53)"/><polygon points="293.77,564.12 402.03,583.03 392.66,587.38" fill="url(#w54)"/><polygon points="293.77,564.12 392.66,587.38 383.29,591.74" fill="url(#w55)"/><polygon points="293.77,564.12 383.29,591.74 373.91,596.09" fill="url(#w56)"/><polygon points="293.77,564.12 373.91,596.09 364.54,600.44" fill="url(#w57)"/><polygon points="293.77,564.12 364.54,600.44 355.17,604.79" fill="url(#w58)"/><polygon points="293.77,564.12 355.17,604.79 345.80,609.14" fill="url(#w59)"/><polygon points="293.77,564.12 345.80,609.14 336.42,613.50" fill="url(#w60)"/><polygon points="293.77,564.12 336.42,613.50 327.05,617.85" fill="url(#w61)"/><polygon points="293.77,564.12 327.05,617.85 317.68,622.20" fill="url(#w62)"/><polygon points="293.77,564.12 317.68,622.20 308.31,626.55" fill="url(#w63)"/><polygon points="293.77,564.12 308.31,626.55 298.93,630.90" fill="url(#w64)"/><polygon points="293.77,564.12 298.93,630.90 289.56,635.25" fill="url(#w65)"/><polygon points="293.77,564.12 289.56,635.25 280.19,639.61" fill="url(#w66)"/><polygon points="293.77,564.12 280.19,639.61 270.82,643.96" fill="url(#w67)"/><polygon points="293.77,564.12 270.82,643.96 261.44,648.31" fill="url(#w68)"/><polygon points="293.77,564.12 261.44,648.31 252.07,652.66" fill="url(#w69)"/></g>
<polyline points="219,620.5 251.5,601.5 262,612 243,646 219,620.5" fill="none" stroke="#111" stroke-width="1"/>
<circle cx="252.1" cy="652.7" r="2.6" fill="#000"/>
<circle cx="244.0" cy="646.1" r="2.6" fill="#000"/>
<circle cx="238.7" cy="638.5" r="2.6" fill="#000"/>
<circle cx="229.9" cy="618.5" r="2.6" fill="#000"/>
<circle cx="217.6" cy="575.1" r="2.6" fill="#000"/>
<circle cx="207.7" cy="510.0" r="2.6" fill="#000"/>
<circle cx="209.2" cy="453.3" r="2.6" fill="#000"/>
<circle cx="225.4" cy="431.0" r="2.6" fill="#000"/>
<circle cx="246.9" cy="438.4" r="2.6" fill="#000"/>
<circle cx="266.9" cy="452.2" r="2.6" fill="#000"/>
<circle cx="286.2" cy="468.8" r="2.6" fill="#000"/>
<circle cx="305.3" cy="486.9" r="2.6" fill="#000"/>
<circle cx="324.3" cy="505.6" r="2.6" fill="#000"/>
<circle cx="342.6" cy="523.8" r="2.6" fill="#000"/>
<circle cx="359.4" cy="540.5" r="2.6" fill="#000"/>
<circle cx="373.2" cy="554.4" r="2.6" fill="#000"/>
<circle cx="383.6" cy="564.7" r="2.6" fill="#000"/>
<circle cx="390.5" cy="571.5" r="2.6" fill="#000"/>
<circle cx="397.8" cy="578.9" r="2.6" fill="#000"/>
<circle cx="402.0" cy="583.0" r="2.6" fill="#000"/>
<g font-size="7.5" fill="#3a3a3a" font-family="Liberation Sans"><text x="228.9" y="432.5">520</text><text x="250.4" y="439.9">530</text><text x="270.4" y="453.7">540</text><text x="289.7" y="470.3">550</text><text x="308.8" y="488.4">560</text><text x="327.8" y="507.1">570</text><text x="346.1" y="525.3">580</text><text x="362.9" y="542.0">590</text><text x="376.7" y="555.9">600</text><text x="387.1" y="566.2">610</text><text x="394.0" y="573.0">620</text><text x="401.3" y="580.4">640</text><text x="207.2" y="456.3" text-anchor="end">510</text><text x="205.2" y="513.0" text-anchor="end">500</text><text x="214.6" y="585.1" text-anchor="end">490</text><text x="226.4" y="620.5" text-anchor="end">480</text><text x="235.2" y="641.5" text-anchor="end">470</text><text x="239.5" y="649.1" text-anchor="end">460</text><text x="257.1" y="655.7">380~410</text><text x="400.0" y="593.0">700~780</text></g>
<g font-size="10.5" fill="#444" font-family="Liberation Sans"><text x="203.5" y="658.5" text-anchor="end">0.0</text><text x="203.5" y="631.8" text-anchor="end">0.1</text><text x="203.5" y="605.0" text-anchor="end">0.2</text><text x="203.5" y="578.2" text-anchor="end">0.3</text><text x="203.5" y="551.5" text-anchor="end">0.4</text><text x="203.5" y="524.8" text-anchor="end">0.5</text><text x="203.5" y="498.0" text-anchor="end">0.6</text><text x="203.5" y="471.2" text-anchor="end">0.7</text><text x="203.5" y="444.5" text-anchor="end">0.8</text><text x="231.8" y="667" text-anchor="middle">0.1</text><text x="258.5" y="667" text-anchor="middle">0.2</text><text x="285.2" y="667" text-anchor="middle">0.3</text><text x="312.0" y="667" text-anchor="middle">0.4</text><text x="338.8" y="667" text-anchor="middle">0.5</text><text x="365.5" y="667" text-anchor="middle">0.6</text><text x="392.2" y="667" text-anchor="middle">0.7</text><text x="411" y="667">x</text><text x="198" y="425">y</text></g>
<path d="M252.5,586.5 L259,592 L252.5,597.5" fill="none" stroke="#8a8a8a" stroke-width="1.8"/>
<g stroke="#2020d8" stroke-width="2"><line x1="258.5" y1="586.5" x2="269.5" y2="597.5"/><line x1="258.5" y1="597.5" x2="269.5" y2="586.5"/></g>
<line x1="465" y1="414" x2="465" y2="654" stroke="#454545" stroke-width="2"/><line x1="460" y1="414" x2="477" y2="414" stroke="#454545" stroke-width="2"/><line x1="460" y1="629.5" x2="464" y2="629.5" stroke="#8a8a8a" stroke-width="1"/><line x1="460" y1="605.6" x2="464" y2="605.6" stroke="#8a8a8a" stroke-width="1"/><line x1="460" y1="581.6" x2="464" y2="581.6" stroke="#8a8a8a" stroke-width="1"/><line x1="460" y1="557.7" x2="464" y2="557.7" stroke="#8a8a8a" stroke-width="1"/><line x1="460" y1="533.8" x2="464" y2="533.8" stroke="#8a8a8a" stroke-width="1"/><line x1="460" y1="509.8" x2="464" y2="509.8" stroke="#8a8a8a" stroke-width="1"/><line x1="460" y1="485.9" x2="464" y2="485.9" stroke="#8a8a8a" stroke-width="1"/><line x1="460" y1="461.9" x2="464" y2="461.9" stroke="#8a8a8a" stroke-width="1"/><line x1="460" y1="438.0" x2="464" y2="438.0" stroke="#8a8a8a" stroke-width="1"/><g font-size="10.5" fill="#444" font-family="Liberation Sans"><text x="457" y="658.0" text-anchor="end">0.0</text><text x="457" y="634.0" text-anchor="end">0.1</text><text x="457" y="610.1" text-anchor="end">0.2</text><text x="457" y="586.1" text-anchor="end">0.3</text><text x="457" y="562.2" text-anchor="end">0.4</text><text x="457" y="538.2" text-anchor="end">0.5</text><text x="457" y="514.3" text-anchor="end">0.6</text><text x="457" y="490.4" text-anchor="end">0.7</text><text x="457" y="466.4" text-anchor="end">0.8</text><text x="457" y="442.5" text-anchor="end">0.9</text><text x="450.5" y="421" font-size="13.5">β</text></g><line x1="465" y1="654.5" x2="477" y2="654.5" stroke="#454545" stroke-width="1.6"/><g stroke="#e02020" stroke-width="1.3" fill="none"><line x1="455" y1="652.5" x2="476" y2="652.5"/><path d="M460,658 L465,653 L470,658"/><line x1="455" y1="631" x2="471" y2="631"/><path d="M460,625 L465,630.5 L470,625"/></g><g stroke="#8a8a8a" stroke-width="1.2"><line x1="471" y1="604" x2="493" y2="604"/><line x1="482.5" y1="593" x2="482.5" y2="615"/></g><g stroke="#2020d8" stroke-width="2"><line x1="466" y1="632" x2="493" y2="632"/><line x1="482.5" y1="622" x2="482.5" y2="644"/></g>
</svg>

<!-- right tables -->
<div class="tbl" style="top:93px;height:195px">
 <div class="hdr"><span>标样</span><em></em><i>名称</i></div>
 <div class="row" style="top:22.00px"><span>1</span><i class="c2">白</i></div><div class="row" style="top:38.25px"><span>2</span><i class="c2">黄</i></div><div class="row" style="top:54.50px"><span>3</span><i class="c2">橙</i></div><div class="row" style="top:70.75px"><span>4</span><i class="c2">红</i></div><div class="row" style="top:87.00px"><span>5</span><i class="c2">绿</i></div><div class="row" style="top:103.25px"><b class="selbg" style="background:#ECE9D8;"></b><b style="position:absolute;left:8px;top:4px;width:1.5px;height:4px;background:#a8a698"></b><span style="left:18px">6</span><i class="c2">蓝</i></div><div class="row" style="top:119.50px"><span>7</span><i class="c2">灰</i></div><div class="row" style="top:135.75px"><span>8</span><i class="c2">黄</i></div><div class="row" style="top:152.00px"><span>9</span><i class="c2">黄</i></div><div class="row" style="top:168.25px"><span>10</span><i class="c2">黄</i></div><div class="row" style="top:184.50px"><span>11</span><i class="c2">白</i></div>
 <div class="vcol" style="height:195px"></div>
</div>
<div class="a" style="left:523px;top:288px;width:78px;height:6px;background:linear-gradient(#ECE9D8 0,#ECE9D8 1px,#f8f7f0 1px,#f8f7f0 2px,#ECE9D8 2px)"></div>
<div class="tbl" style="top:294px;height:213px">
 <div class="hdr"><span>试样</span><em></em><i>名称</i></div>
 <div class="row" style="top:21.00px"><b class="selbg" style="background:#316AC5;width:80px"></b><span style="color:#fff">1</span><i class="c2s">S</i></div><div class="row" style="top:37.25px"><b class="selbg" style="background:#316AC5;width:80px"></b><b style="position:absolute;left:8px;top:4px;width:2px;height:4px;background:#fff"></b><span style="left:17px;color:#fff">2</span><i class="c2s">S</i></div><div class="row" style="top:53.50px"></div><div class="row" style="top:69.75px"></div><div class="row" style="top:86.00px"></div><div class="row" style="top:102.25px"></div><div class="row" style="top:118.50px"></div><div class="row" style="top:134.75px"></div><div class="row" style="top:151.00px"></div><div class="row" style="top:167.25px"></div><div class="row" style="top:183.50px"></div><div class="row" style="top:199.75px"></div>
 <div class="vcol" style="height:213px"></div>
</div>
<div class="a" style="left:523px;top:507px;width:78px;height:6px;background:linear-gradient(#ECE9D8 0,#ECE9D8 1px,#f8f7f0 1px,#f8f7f0 2px,#ECE9D8 2px)"></div>
<div class="a" style="left:523px;top:513px;width:78px;height:163px;background:#C0C0C0;border-left:2px solid #111;border-top:2px solid #111;overflow:hidden">
 <div class="a" style="left:3px;top:31px;font-size:10.5px;color:#1a1a1a">λ(nm)</div>
<div class="a" style="left:4px;top:44px;font-size:10.3px;color:#2222dd">400</div><div class="a" style="left:4px;top:57px;font-size:10.3px;color:#1a1a1a">410</div><div class="a" style="left:4px;top:69px;font-size:10.3px;color:#1a1a1a">420</div><div class="a" style="left:4px;top:81px;font-size:10.3px;color:#1a1a1a">430</div><div class="a" style="left:4px;top:93px;font-size:10.3px;color:#1a1a1a">440</div><div class="a" style="left:4px;top:105px;font-size:10.3px;color:#1a1a1a">450</div><div class="a" style="left:4px;top:117px;font-size:10.3px;color:#1a1a1a">460</div><div class="a" style="left:4px;top:130px;font-size:10.3px;color:#1a1a1a">470</div><div class="a" style="left:4px;top:142px;font-size:10.3px;color:#1a1a1a">480</div><div class="a" style="left:4px;top:154px;font-size:10.3px;color:#1a1a1a">490</div>
</div>
<div class="a" style="left:0;top:675px;width:601px;height:1px;background:#f4f4f4"></div>

<div class="a" style="left:455.84px;top:55.16px;width:23.22px;height:25.92px;background:radial-gradient(circle at 9.59px 16.21px,#fff 0,rgba(255,255,255,.7) 3px,rgba(255,255,255,0) 10px),conic-gradient(from 0deg at 9.59px 16.21px, #29f700 0deg, #2df500 1.30deg, #6eec00 8.50deg, #a5e000 17.24deg, #c0d400 27.55deg, #dcc800 38.93deg, #e8b700 50.47deg, #f3a700 61.14deg, #ff9600 70.22deg, #ff7d00 77.50deg, #ff6400 82.99deg, #ff440a 87.23deg, #ff2314 90.34deg, #ff2114 92.67deg, #ff1f15 94.38deg, #ff1d15 95.66deg, #ff1b15 96.64deg, #ff1915 97.43deg, #ff1716 98.06deg, #ff1516 98.54deg, #ff1316 98.90deg, #ff1017 99.37deg, #ff0818 99.76deg, #ff0019 99.91deg, #ff002a 103.24deg, #ff0043 107.15deg, #ff0057 111.75deg, #ff0068 117.17deg, #ff0078 123.52deg, #ff0089 130.88deg, #ff0099 139.18deg, #ff00ab 148.23deg, #ff00be 157.63deg, #ff00d3 166.90deg, #ff00eb 175.58deg, #f600ff 183.39deg, #b900ff 190.20deg, #8a00ff 196.04deg, #6a00ff 201.01deg, #5a00ff 205.22deg, #5300ff 205.26deg, #4d00ff 205.32deg, #4600ff 205.42deg, #4300ff 205.49deg, #3f00ff 205.61deg, #3c00ff 205.81deg, #3900ff 206.08deg, #3500ff 206.48deg, #3200ff 206.99deg, #2a02ff 207.66deg, #2305ff 208.58deg, #1c08ff 209.74deg, #140aff 211.27deg, #0a23ff 213.30deg, #003cff 216.51deg, #0058f8 221.49deg, #0073f0 229.58deg, #0097e5 242.63deg, #00b5dd 261.80deg, #00d0d7 284.05deg, #00eeb3 302.17deg, #00fc7a 314.35deg, #00ff32 322.65deg, #00ff19 328.55deg, #00ff00 332.81deg, #04ff00 336.24deg, #08ff00 339.54deg, #0cff00 342.90deg, #11ff00 346.50deg, #15ff00 350.61deg, #19ff00 355.44deg, #29f700 360deg);clip-path:polygon(5.08px 25.78px,5.08px 25.78px,5.06px 25.78px,5.04px 25.78px,5.03px 25.78px,5.01px 25.77px,4.97px 25.75px,4.93px 25.72px,4.88px 25.67px,4.80px 25.61px,4.71px 25.52px,4.58px 25.41px,4.42px 25.26px,4.21px 25.06px,3.97px 24.77px,3.64px 24.25px,3.22px 23.41px,2.69px 22.09px,2.04px 20.12px,1.37px 17.40px,0.73px 14.00px,0.29px 10.37px,0.17px 7.00px,0.46px 4.25px,1.18px 2.46px,2.20px 1.83px,3.35px 2.05px,4.52px 2.64px,5.63px 3.34px,6.69px 4.13px,7.73px 4.99px,8.77px 5.92px,9.80px 6.88px,10.83px 7.88px,11.86px 8.89px,12.88px 9.89px,13.89px 10.89px,14.86px 11.86px,15.79px 12.79px,16.67px 13.66px,17.47px 14.47px,18.17px 15.16px,18.78px 15.77px,19.29px 16.27px,19.70px 16.68px,20.03px 17.01px,20.29px 17.27px,20.51px 17.48px,20.68px 17.66px,20.83px 17.80px,20.94px 17.92px,21.03px 18.00px,21.14px 18.12px,21.24px 18.22px,21.28px 18.26px,20.27px 18.73px,19.26px 19.20px,18.24px 19.67px,17.23px 20.14px,16.22px 20.61px,15.21px 21.08px,14.19px 21.55px,13.18px 22.02px,12.17px 22.49px,11.16px 22.96px,10.14px 23.43px,9.13px 23.90px,8.12px 24.37px,7.11px 24.84px,6.10px 25.31px)"></div>
<!-- dropdown -->
<div id="dd" class="a">
 <div id="ddsel" class="a"></div>
 <div class="dit" style="top:6px">新建</div>
 <div class="dit" style="top:25px">打开</div>
 <div class="dit" style="top:45px">关闭</div>
 <div class="dit" style="top:64px">保存</div><div class="dit" style="top:66px;left:53px;font-family:'Liberation Mono';font-size:11px;text-shadow:none">Ctrl+S</div>
 <div class="dit" style="top:83px">另存为</div>
 <div class="dit" style="top:103px">重命名</div>
 <div class="dit" style="top:122px;color:#fff">导出数据</div>
 <div class="dit" style="top:142px">退出</div>
</div>
</body></html>
